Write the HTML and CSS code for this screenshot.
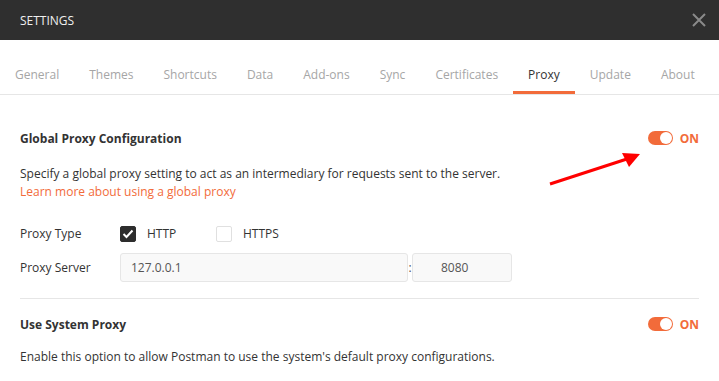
FILE: index.html
```html
<!DOCTYPE html>
<html>
<head>
  <title>Settings</title>
  <link rel="stylesheet" href="styles.css">
</head>
<body>
  <div class="header">
    <span class="title">SETTINGS</span>
    <svg class="close" width="14" height="14" viewBox="0 0 14 14">
      <path d="M1 1 L13 13 M13 1 L1 13" stroke="#8a8a8a" stroke-width="2" fill="none"/>
    </svg>
  </div>

  <div class="tabs">
    <span class="tab">General</span>
    <span class="tab">Themes</span>
    <span class="tab">Shortcuts</span>
    <span class="tab">Data</span>
    <span class="tab">Add-ons</span>
    <span class="tab">Sync</span>
    <span class="tab">Certificates</span>
    <span class="tab active">Proxy</span>
    <span class="tab">Update</span>
    <span class="tab">About</span>
  </div>

  <div class="content">
    <div class="section">
      <div class="section-head">
        <span class="section-title">Global Proxy Configuration</span>
        <span class="toggle"><span class="switch"><span class="knob"></span></span>ON</span>
      </div>
      <p class="desc">Specify a global proxy setting to act as an intermediary for requests sent to the server.<br>
        <a class="link">Learn more about using a global proxy</a></p>

      <div class="row first">
        <span class="label">Proxy Type</span>
        <span class="check checked">
          <svg width="12" height="10" viewBox="0 0 12 10"><path d="M1.5 5 L4.5 8 L10.5 1.5" stroke="#fff" stroke-width="2" fill="none"/></svg>
        </span>
        <span class="check-text">HTTP</span>
        <span class="check"></span>
        <span class="check-text">HTTPS</span>
      </div>
      <div class="row server">
        <span class="label">Proxy Server</span>
        <span class="input host">127.0.0.1</span>
        <span class="colon">:</span>
        <span class="input port">8080</span>
      </div>
    </div>

    <div class="section second">
      <div class="section-head">
        <span class="section-title">Use System Proxy</span>
        <span class="toggle"><span class="switch"><span class="knob"></span></span>ON</span>
      </div>
      <p class="desc">Enable this option to allow Postman to use the system's default proxy configurations.</p>
    </div>
  </div>

  <!-- flecha vermelha por cima da tela -->
  <svg class="arrow" width="110" height="45" viewBox="0 0 110 45">
    <path d="M8 38 L88 12" stroke="#ff0000" stroke-width="3" fill="none"/>
    <path d="M98 8 L80 7 L87 21 Z" fill="#ff0000"/>
  </svg>
</body>
</html>
```

FILE: styles.css
```css
body {
  margin: 0;
  font-family: "Open Sans", sans-serif;
  font-size: 12px;
  color: #333;
  background-color: #fff;
  position: relative;
}
.header {
  height: 40px;
  background-color: #2f2f2f;
  display: flex;
  align-items: center;
  justify-content: space-between;
  padding: 0 13px 0 20px;
}
.title {
  color: #f0f0f0;
  font-size: 12px;
}
.tabs {
  display: flex;
  height: 54px;
  align-items: flex-end;
  border-bottom: 1px solid #e6e6e6;
}
.tab {
  color: #a6a6a6;
  font-size: 12px;
  padding: 0 15px 8px;
  border-bottom: 3px solid transparent;
}
.tab.active {
  color: #333;
  border-bottom-color: #f26b3a;
}
.content {
  padding: 0 20px;
}
.section {
  padding-top: 33px;
  padding-bottom: 14px;
  border-bottom: 1px solid #e6e6e6;
}
.section.second {
  border-bottom: none;
  padding-top: 15px;
}
.section-head {
  display: flex;
  justify-content: space-between;
  align-items: center;
  height: 20px;
}
.section-title {
  font-weight: bold;
  font-size: 12px;
  color: #333;
}
.toggle {
  display: flex;
  align-items: center;
  color: #f26b3a;
  font-weight: bold;
  font-size: 12px;
}
.switch {
  width: 25px;
  height: 14px;
  border-radius: 7px;
  background-color: #f26b3a;
  position: relative;
  margin-right: 7px;
}
.knob {
  position: absolute;
  right: 1px;
  top: 1px;
  width: 12px;
  height: 12px;
  border-radius: 50%;
  background-color: #fff;
}
.desc {
  margin: 17px 0 0;
  line-height: 18px;
  color: #333;
}
.second .desc {
  margin-top: 14px;
}
.link {
  color: #f26b3a;
}
.row {
  display: flex;
  align-items: center;
  height: 33px;
}
.row.first {
  margin-top: 16px;
}
.row.server {
  height: 34px;
}
.label {
  width: 100px;
  color: #333;
}
.check {
  width: 16px;
  height: 16px;
  border: 1px solid #e0e0e0;
  border-radius: 2px;
  box-sizing: border-box;
  display: flex;
  align-items: center;
  justify-content: center;
  margin-right: 11px;
}
.check.checked {
  background-color: #2d2d2d;
  border-color: #2d2d2d;
}
.check-text {
  width: 69px;
  color: #333;
}
.input {
  height: 29px;
  box-sizing: border-box;
  background-color: #f9f9f9;
  border: 1px solid #e6e6e6;
  border-radius: 3px;
  display: flex;
  align-items: center;
  color: #555;
}
.input.host {
  width: 288px;
  padding-left: 10px;
}
.colon {
  width: 4px;
  text-align: center;
  color: #555;
}
.input.port {
  width: 100px;
  padding-left: 28px;
}
.arrow {
  position: absolute;
  left: 542px;
  top: 146px;
}
```
